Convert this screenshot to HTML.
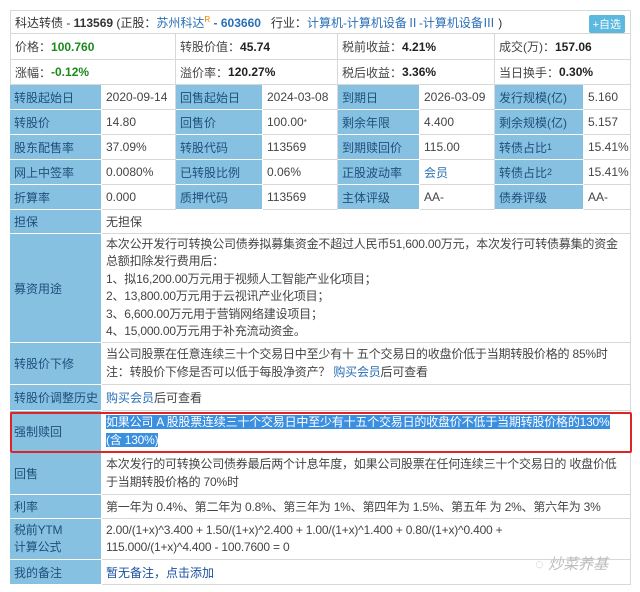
<!DOCTYPE html>
<html><head><meta charset="utf-8"><style>
body{margin:0;width:640px;height:592px;background:#fff;font-family:"Liberation Sans","Noto Sans CJK SC",sans-serif;font-size:12px;color:#333;position:relative;overflow:hidden}
.c{position:absolute;box-sizing:border-box;border-right:1px solid #d8d8d8;border-bottom:1px solid #d8d8d8;padding-left:4px;display:flex;align-items:center;white-space:nowrap;color:#444}
.l{background:#86c1e2;color:#1f4f7a;border-right:1px solid #fff;border-bottom:1px solid #fff}
.w{white-space:normal;line-height:17.5px}
.w>div{width:100%;letter-spacing:-0.2px}
a{color:#2a6fb5;text-decoration:none}
.b{font-weight:bold;color:#222}
.g{color:#1a8a1a;font-weight:bold}
</style></head><body>
<div class="c" style="left:10px;top:10px;width:621px;height:24px;border:1px solid #d8d8d8"><span style="color:#333">科达转债 - <b>113569</b> (正股：<a>苏州科达</a><sup style="color:#f08000;font-size:8px">R</sup> <b style="color:#2a6fb5"> - 603660</b> &nbsp; 行业：<a>计算机-计算机设备Ⅱ-计算机设备Ⅲ</a> )</span>
<span style="position:absolute;right:5px;top:4px;background:#5bb8de;color:#fff;font-size:11px;padding:1px 4px;border-radius:2px">+自选</span></div>
<div class="c" style="left:10px;top:34px;width:166px;height:26px;border-left:1px solid #d8d8d8">价格：<span class="g">100.760</span></div>
<div class="c" style="left:176px;top:34px;width:162px;height:26px">转股价值：<span class="b">45.74</span></div>
<div class="c" style="left:338px;top:34px;width:157px;height:26px">税前收益：<span class="b">4.21%</span></div>
<div class="c" style="left:495px;top:34px;width:136px;height:26px">成交(万)：<span class="b">157.06</span></div>
<div class="c" style="left:10px;top:60px;width:166px;height:25px;border-left:1px solid #d8d8d8">涨幅：<span class="g">-0.12%</span></div>
<div class="c" style="left:176px;top:60px;width:162px;height:25px">溢价率：<span class="b">120.27%</span></div>
<div class="c" style="left:338px;top:60px;width:157px;height:25px">税后收益：<span class="b">3.36%</span></div>
<div class="c" style="left:495px;top:60px;width:136px;height:25px">当日换手：<span class="b">0.30%</span></div>

<div class="c l" style="left:10px;top:85px;width:92px;height:25px">转股起始日</div><div class="c" style="left:102px;top:85px;width:74px;height:25px">2020-09-14</div>
<div class="c l" style="left:176px;top:85px;width:87px;height:25px">回售起始日</div><div class="c" style="left:263px;top:85px;width:75px;height:25px">2024-03-08</div>
<div class="c l" style="left:338px;top:85px;width:82px;height:25px">到期日</div><div class="c" style="left:420px;top:85px;width:75px;height:25px">2026-03-09</div>
<div class="c l" style="left:495px;top:85px;width:89px;height:25px">发行规模(亿)</div><div class="c" style="left:584px;top:85px;width:47px;height:25px">5.160</div>

<div class="c l" style="left:10px;top:110px;width:92px;height:25px">转股价</div><div class="c" style="left:102px;top:110px;width:74px;height:25px">14.80</div>
<div class="c l" style="left:176px;top:110px;width:87px;height:25px">回售价</div><div class="c" style="left:263px;top:110px;width:75px;height:25px">100.00<sup style="font-size:8px">*</sup></div>
<div class="c l" style="left:338px;top:110px;width:82px;height:25px">剩余年限</div><div class="c" style="left:420px;top:110px;width:75px;height:25px">4.400</div>
<div class="c l" style="left:495px;top:110px;width:89px;height:25px">剩余规模(亿)</div><div class="c" style="left:584px;top:110px;width:47px;height:25px">5.157</div>

<div class="c l" style="left:10px;top:135px;width:92px;height:25px">股东配售率</div><div class="c" style="left:102px;top:135px;width:74px;height:25px">37.09%</div>
<div class="c l" style="left:176px;top:135px;width:87px;height:25px">转股代码</div><div class="c" style="left:263px;top:135px;width:75px;height:25px">113569</div>
<div class="c l" style="left:338px;top:135px;width:82px;height:25px">到期赎回价</div><div class="c" style="left:420px;top:135px;width:75px;height:25px">115.00</div>
<div class="c l" style="left:495px;top:135px;width:89px;height:25px">转债占比<sup style="font-size:9px">1</sup></div><div class="c" style="left:584px;top:135px;width:47px;height:25px">15.41%</div>

<div class="c l" style="left:10px;top:160px;width:92px;height:25px">网上中签率</div><div class="c" style="left:102px;top:160px;width:74px;height:25px">0.0080%</div>
<div class="c l" style="left:176px;top:160px;width:87px;height:25px">已转股比例</div><div class="c" style="left:263px;top:160px;width:75px;height:25px">0.06%</div>
<div class="c l" style="left:338px;top:160px;width:82px;height:25px">正股波动率</div><div class="c" style="left:420px;top:160px;width:75px;height:25px"><a>会员</a></div>
<div class="c l" style="left:495px;top:160px;width:89px;height:25px">转债占比<sup style="font-size:9px">2</sup></div><div class="c" style="left:584px;top:160px;width:47px;height:25px">15.41%</div>

<div class="c l" style="left:10px;top:185px;width:92px;height:25px">折算率</div><div class="c" style="left:102px;top:185px;width:74px;height:25px">0.000</div>
<div class="c l" style="left:176px;top:185px;width:87px;height:25px">质押代码</div><div class="c" style="left:263px;top:185px;width:75px;height:25px">113569</div>
<div class="c l" style="left:338px;top:185px;width:82px;height:25px">主体评级</div><div class="c" style="left:420px;top:185px;width:75px;height:25px">AA-</div>
<div class="c l" style="left:495px;top:185px;width:89px;height:25px">债券评级</div><div class="c" style="left:584px;top:185px;width:47px;height:25px">AA-</div>

<div class="c l" style="left:10px;top:210px;width:92px;height:24px">担保</div><div class="c" style="left:102px;top:210px;width:529px;height:24px">无担保</div>
<div class="c l" style="left:10px;top:234px;width:92px;height:109px">募资用途</div><div class="c w" style="left:102px;top:234px;width:529px;height:109px"><div>本次公开发行可转换公司债券拟募集资金不超过人民币51,600.00万元，本次发行可转债募集的资金<br>总额扣除发行费用后：<br>1、拟16,200.00万元用于视频人工智能产业化项目；<br>2、13,800.00万元用于云视讯产业化项目；<br>3、6,600.00万元用于营销网络建设项目；<br>4、15,000.00万元用于补充流动资金。</div></div>
<div class="c l" style="left:10px;top:343px;width:92px;height:42px">转股价下修</div><div class="c w" style="left:102px;top:343px;width:529px;height:42px"><div>当公司股票在任意连续三十个交易日中至少有十 五个交易日的收盘价低于当期转股价格的 85%时<br>注：转股价下修是否可以低于每股净资产？ <a>购买会员</a>后可查看</div></div>
<div class="c l" style="left:10px;top:385px;width:92px;height:26px">转股价调整历史</div><div class="c" style="left:102px;top:385px;width:529px;height:26px"><span><a>购买会员</a>后可查看</span></div>
<div class="c l" style="left:10px;top:411px;width:92px;height:42px">强制赎回</div><div class="c w" style="left:102px;top:411px;width:529px;height:42px"><div><span style="background:#3b8fe0;color:#fff">如果公司 A 股股票连续三十个交易日中至少有十五个交易日的收盘价不低于当期转股价格的130%<br>(含 130%)</span></div></div>
<div style="position:absolute;left:10px;top:412px;width:622px;height:41px;border:2px solid #e02424;box-sizing:border-box;border-radius:2px"></div>
<div class="c l" style="left:10px;top:453px;width:92px;height:42px">回售</div><div class="c w" style="left:102px;top:453px;width:529px;height:42px"><div>本次发行的可转换公司债券最后两个计息年度，如果公司股票在任何连续三十个交易日的 收盘价低<br>于当期转股价格的 70%时</div></div>
<div class="c l" style="left:10px;top:495px;width:92px;height:24px">利率</div><div class="c" style="left:102px;top:495px;width:529px;height:24px;letter-spacing:-0.2px">第一年为 0.4%、第二年为 0.8%、第三年为 1%、第四年为 1.5%、第五年 为 2%、第六年为 3%</div>
<div class="c l w" style="left:10px;top:519px;width:92px;height:41px"><div>税前YTM<br>计算公式</div></div><div class="c w" style="left:102px;top:519px;width:529px;height:41px"><div>2.00/(1+x)^3.400 + 1.50/(1+x)^2.400 + 1.00/(1+x)^1.400 + 0.80/(1+x)^0.400 +<br>115.000/(1+x)^4.400 - 100.7600 = 0</div></div>
<div class="c l" style="left:10px;top:560px;width:92px;height:25px">我的备注</div><div class="c" style="left:102px;top:560px;width:529px;height:25px"><a style="color:#1a4fa0">暂无备注，点击添加</a></div>
<div style="position:absolute;left:535px;top:553px;color:#bbb;font-size:15px;font-style:italic">◌ 炒菜养基</div>
</body></html>
